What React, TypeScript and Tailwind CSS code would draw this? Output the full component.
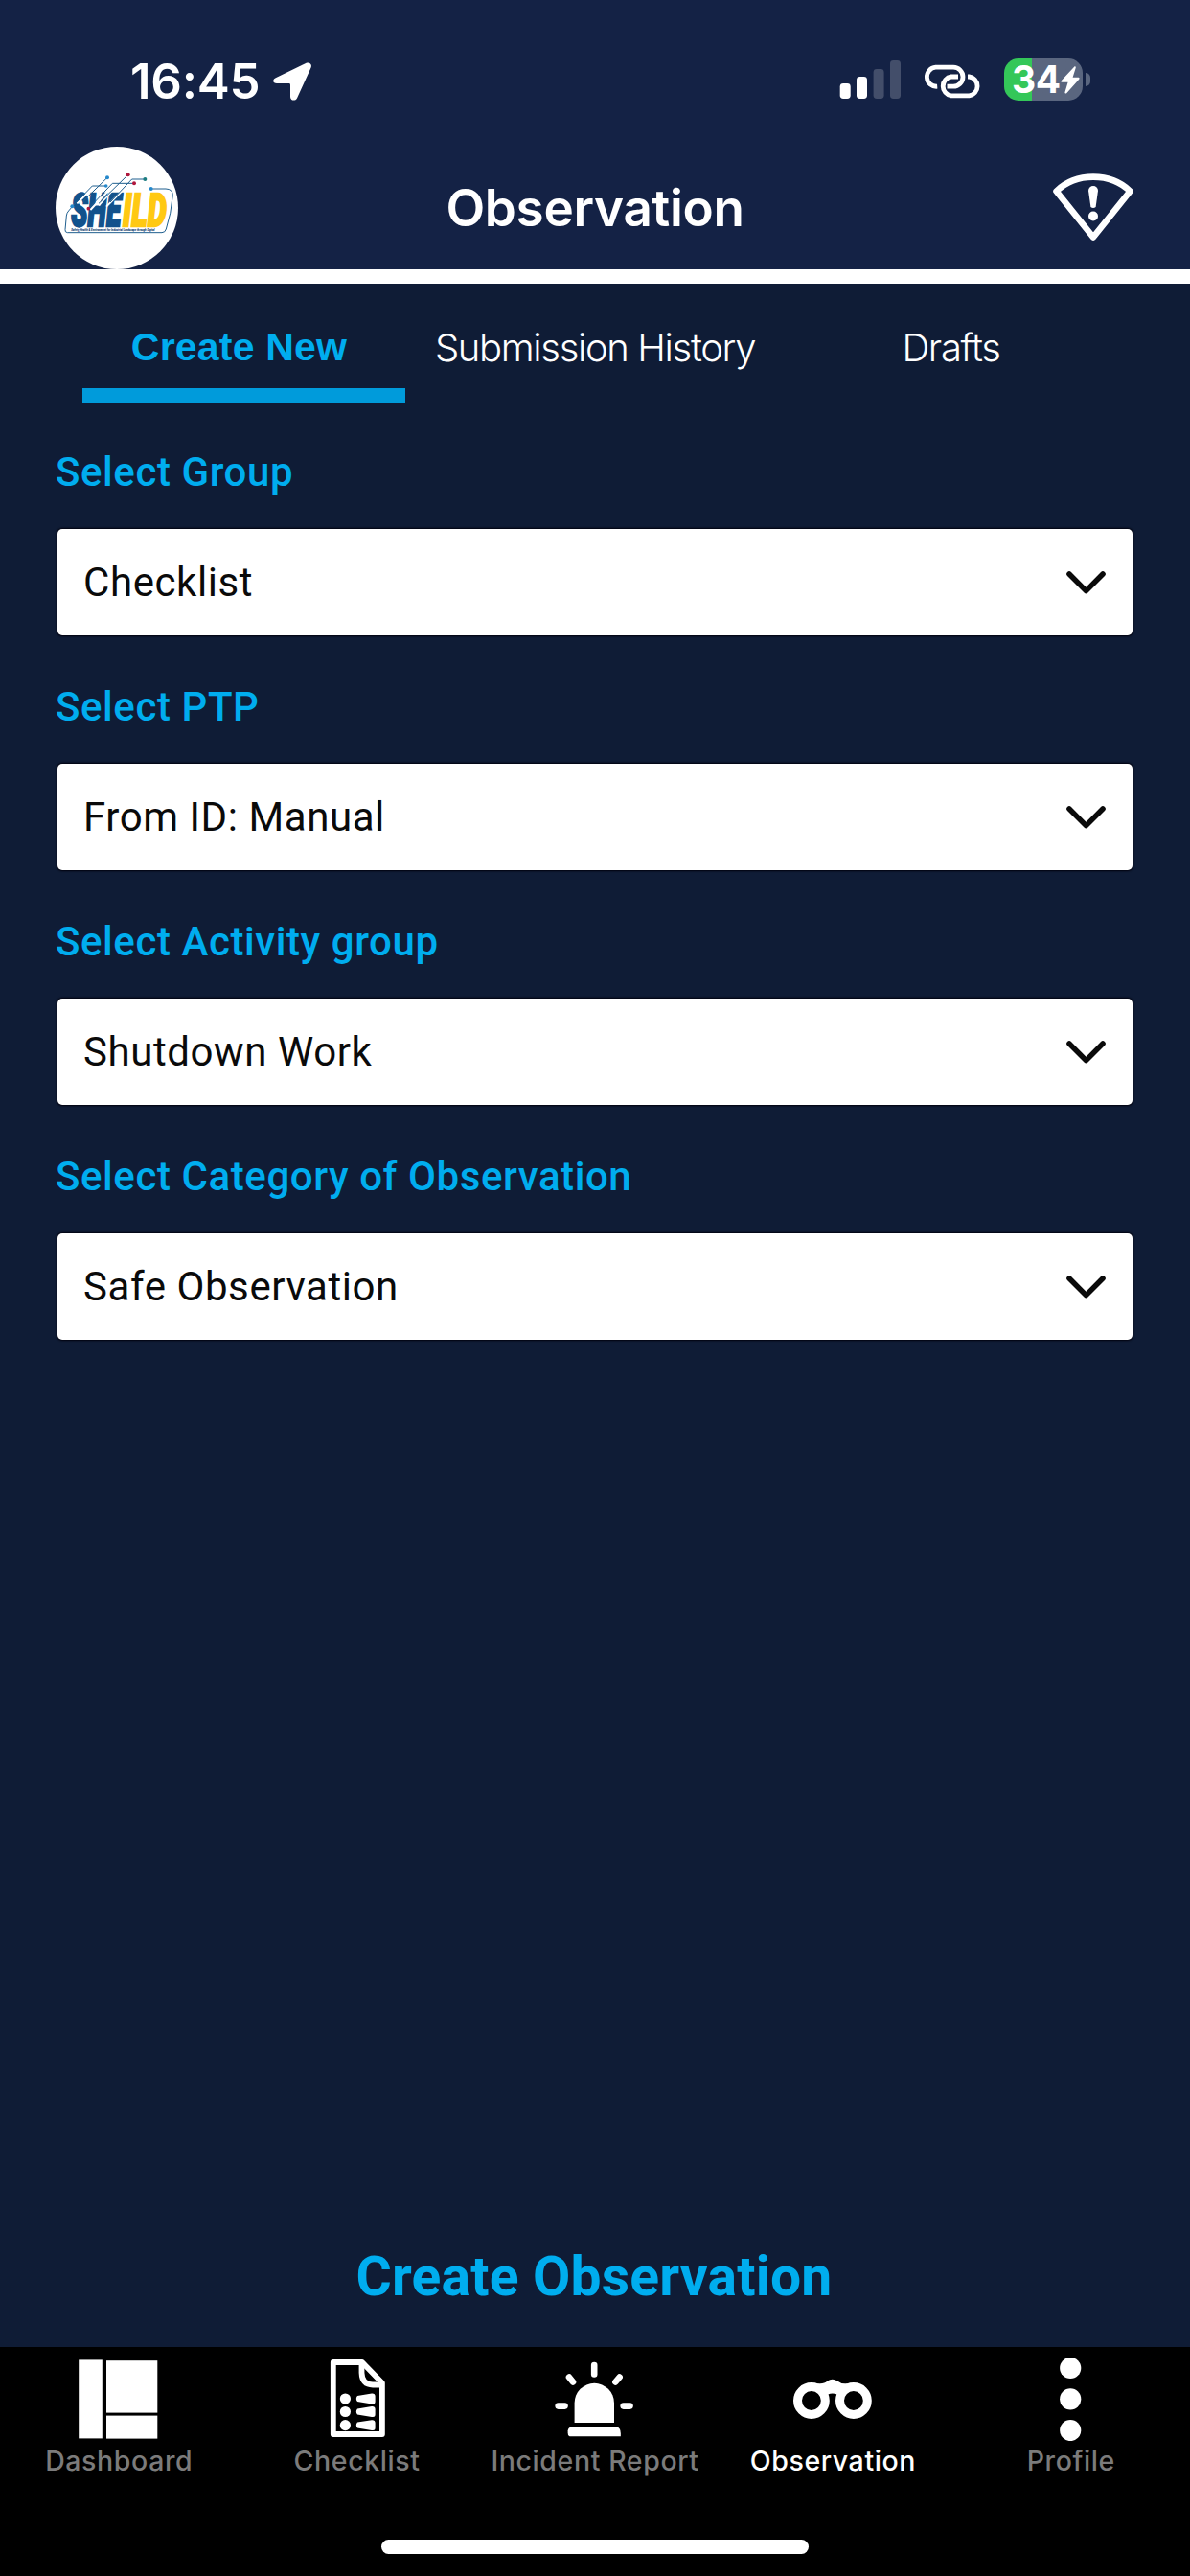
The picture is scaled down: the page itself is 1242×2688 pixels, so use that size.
import React from 'react';

const fields = [
  { label: 'Select Group', value: 'Checklist' },
  { label: 'Select PTP', value: 'From ID: Manual' },
  { label: 'Select Activity group', value: 'Shutdown Work' },
  { label: 'Select Category of Observation', value: 'Safe Observation' },
];

const StatusBar = () => (
  <div className="flex h-[153px] items-start justify-between pl-[136px] pr-[104px] pt-[61px]">
    <div className="flex items-center gap-[13px]">
      <span className="font-['Inter'] text-[51px] font-semibold leading-[48px] tracking-[-0.2px]">16:45</span>
      <svg width="40" height="40" viewBox="0 0 40 40" fill="#fff">
        <path d="M3.2 16 L34.6 0.8 C38 -0.6 41 2 39.6 5.6 L25 37.4 C23 41 18 40 18 36 V23.4 Q18 22 16.6 22 H4 C-0.5 22 -1.2 18 3.2 16 Z" />
      </svg>
    </div>
    <div className="flex items-start">
      <svg className="mr-[24px]" width="64" height="44" viewBox="0 0 64 44">
        <rect x="0.7" y="26" width="11" height="16" rx="3.4" fill="#fff" />
        <rect x="18" y="19" width="11" height="23" rx="3.4" fill="#fff" />
        <rect x="35.6" y="11" width="11" height="31" rx="3.4" fill="#434e6a" />
        <rect x="53" y="2" width="11" height="40" rx="3.4" fill="#434e6a" />
      </svg>
      <svg className="mr-[24px]" width="60" height="44" viewBox="0 0 60 44" fill="none" stroke="#fff" strokeWidth="4.8">
        <path d="M14.2 29.2 A10 10 0 0 1 12.6 9.2 H31 A10 10 0 0 1 31 29.2 H24.5" />
        <path d="M46 19 H47.5 A10 10 0 0 1 47.5 38.8 H28.8 A10 10 0 0 1 28.8 19 H36" />
      </svg>
      <div className="flex items-center gap-[3px]">
        <div className="flex h-[44px] w-[82px] items-center rounded-[15px] bg-linear-to-r from-[#34c759] from-[35%] to-[#5a667f] to-[35%] pl-[8px]">
          <span className="font-['Inter'] text-[39px] font-bold leading-[44px] tracking-[-0.5px]">34</span>
          <svg width="20" height="29" viewBox="0 0 20 29" fill="#fff">
            <path d="M14.6 0.3 L0.6 15.2 Q-0.2 16.6 1.4 16.7 H7.6 L4.4 27.6 Q4.6 29.2 6.2 28.3 L19.4 13.4 Q20 12 18.6 11.8 H12.6 L15.8 1.4 Q15.8 0 14.6 0.3 Z" />
          </svg>
        </div>
        <div className="h-[14px] w-[5px] rounded-r-full bg-[#5a667f]" />
      </div>
    </div>
  </div>
);

const Logo = () => (
  <svg width="128" height="128" viewBox="0 0 384 384">
    <circle cx="192" cy="192" r="192" fill="#fff" />
    <g transform="translate(-55 -40)">
      <g fontFamily="Roboto, sans-serif" fontWeight="900" fontStyle="italic" fontSize="146" strokeWidth="7">
        <text transform="translate(104 289) scale(0.585 1)" fill="#12528c" stroke="#12528c">SHE</text>
        <text transform="translate(265 289) scale(0.65 1)" fill="#ffc913" stroke="#ffc913">ILD</text>
      </g>
      <path d="M122 218 L168 172 M164 238 L226 172 M190 224 L236 174 M214 228 L262 180" fill="none" stroke="#fff" strokeWidth="6" />
      <g fill="none" stroke="#1f5f8f" strokeWidth="3">
        <path d="M108 227 L170 163 H213" />
        <path d="M140 212 L217 137" />
        <path d="M158 234 L233 155 H301" />
        <path d="M190 218 L282 128" />
        <path d="M226 214 L294 142 H335" />
        <path d="M354 172 H400 Q422 173 422 192 Q417 250 401 298 Q398 309 388 309 H92 Q84 308 85 300 L89 256 Q90 247 96 241 L107 228" />
      </g>
      <g fill="#2488cc">
        <circle cx="107" cy="227" r="6" />
        <circle cx="213" cy="163" r="5.5" />
        <circle cx="217" cy="137" r="6" />
        <circle cx="354" cy="172" r="6" />
      </g>
      <g fill="#b0173c">
        <circle cx="158" cy="234" r="5.5" />
        <circle cx="301" cy="155" r="6" />
        <circle cx="282" cy="128" r="6" />
      </g>
      <circle cx="335" cy="142" r="6" fill="#1c7d80" />
      <text x="104" y="303" fill="#14406f" fontFamily="Roboto, sans-serif" fontWeight="900" fontStyle="italic" fontSize="8.6">
        Safety, Health &amp; Environment for Industrial Landscape through Digital
      </text>
    </g>
  </svg>
);

const Header = () => (
  <div className="flex h-[128px] items-center justify-between pl-[58px] pr-[58px]">
    <Logo />
    <h1 className="font-['Inter'] text-[53px] font-semibold leading-[60px] tracking-[-0.3px]">Observation</h1>
    <div className="flex w-[128px] justify-end">
      <svg width="86" height="72" viewBox="0 0 86 72">
        <path d="M4.5 18.5 C25 -1.4 61 -1.4 81.5 18.5 L43 66.5 Z" fill="none" stroke="#fff" strokeWidth="6.6" strokeLinejoin="round" />
        <path d="M38 18 A5 5 0 0 1 48 18 L45.6 35 Q43 37 40.4 35 Z" fill="#fff" />
        <circle cx="43" cy="44.5" r="5" fill="#fff" />
      </svg>
    </div>
  </div>
);

const Tabs = () => (
  <div className="flex h-[124px] items-stretch pl-[86px] text-[40px] leading-[48px]">
    <div className="flex w-[337px] flex-col justify-between pt-[42px] text-center font-['Liberation_Sans'] font-bold text-[#00adef]">
      <span className="pr-[10px] text-[41px] tracking-[0.2px]">Create New</span>
      <div className="h-[15px] bg-[#009bdb]" />
    </div>
    <div className="w-[396px] pt-[43px] text-center font-['Inter'] font-light tracking-[-1.35px]">Submission History</div>
    <div className="w-[347px] pt-[43px] text-center font-['Inter'] font-light tracking-[-1.35px]">Drafts</div>
  </div>
);

const SelectField = ({ label, value }: { label: string; value: string }) => (
  <div className="flex h-[245px] flex-col">
    <label className="-ml-[2px] h-[84px] text-[42px] font-medium leading-[50px] tracking-[0.58px] text-[#00adef]">{label}</label>
    <div className="flex h-[111px] items-center justify-between rounded-[5px] bg-white pl-[27px] pr-[28px] text-[42px] leading-[50px] text-[#0a0a0a] shadow-[0_0_2px_1px_#00000d]">
      <span className="tracking-[0.58px]">{value}</span>
      <svg width="41" height="24" viewBox="0 0 41 24" fill="none" stroke="#0a0a0a" strokeWidth="5.6" strokeLinecap="round" strokeLinejoin="round">
        <path d="M3 3 L20.5 20.6 L38 3" />
      </svg>
    </div>
  </div>
);

const DashboardIcon = () => (
  <svg width="88" height="88" viewBox="0 0 88 88" fill="#fff">
    <rect x="2.2" y="3.4" width="24.6" height="82" />
    <rect x="31" y="4.2" width="53.3" height="54.4" />
    <rect x="31" y="61.6" width="53.3" height="24" />
  </svg>
);

const ChecklistIcon = () => (
  <svg width="88" height="88" viewBox="0 0 88 88" fill="none" stroke="#fff" strokeWidth="5.8" strokeLinejoin="round">
    <path d="M18.8 6 H49 L69.9 27.5 V81 H18.8 Z" />
    <path d="M48.5 7 V17 Q49 29.5 60 29.5 H69" />
    <g fill="#fff" stroke="none">
      <circle cx="31.4" cy="44" r="5.6" />
      <circle cx="31.4" cy="57.5" r="5.6" />
      <circle cx="31.4" cy="71.6" r="5.6" />
      <path d="M44 41 L59 38.6 Q62.6 38.4 62.6 41.6 V47 Q62.6 50 59 49.4 L44 47 Q41.6 44 44 41 Z" />
      <path d="M44 54.5 L59 52.1 Q62.6 51.9 62.6 55.1 V60.5 Q62.6 63.5 59 62.9 L44 60.5 Q41.6 57.5 44 54.5 Z" />
      <path d="M44 68.6 L59 66.2 Q62.6 66 62.6 69.2 V74.6 Q62.6 77.6 59 77 L44 74.6 Q41.6 71.6 44 68.6 Z" />
    </g>
  </svg>
);

const SirenIcon = () => (
  <svg width="88" height="88" viewBox="0 0 88 88" fill="#fff">
    <path d="M22.6 69 V48.5 A20.5 20.5 0 0 1 64 48.5 V69 Z" />
    <path d="M20.4 73 H66 Q70.8 74 70.8 80 V83.2 H17.6 Q15.6 82.5 15.6 79.5 V77.5 Q16 73.6 20.4 73 Z" />
    <g stroke="#fff" strokeWidth="6.6" strokeLinecap="round">
      <path d="M43.2 9 V18.5" />
      <path d="M17 21.5 L21 26.5" />
      <path d="M69.6 21.5 L65.4 26.5" />
      <path d="M5.7 51.6 H12.5" />
      <path d="M73.7 51.6 H80.5" />
    </g>
  </svg>
);

const BinocularsIcon = () => (
  <svg width="88" height="88" viewBox="0 0 88 88">
    <path d="M28 28 Q35 29 38.5 25.5 Q43.8 22 49 25.5 Q53 29 60 28 L53 42 Q49 38.4 43.8 38.4 Q39 38.4 35 42 Z" fill="#fff" />
    <circle cx="21.9" cy="46" r="14.4" fill="#000" stroke="#fff" strokeWidth="9" />
    <circle cx="65.9" cy="46" r="14.4" fill="#000" stroke="#fff" strokeWidth="9" />
  </svg>
);

const DotsIcon = () => (
  <svg width="88" height="88" viewBox="0 0 88 88" fill="#fff">
    <circle cx="43.2" cy="12" r="11.1" />
    <circle cx="43.2" cy="44.3" r="11.1" />
    <circle cx="43.2" cy="77" r="11.1" />
  </svg>
);

const navItems = [
  { label: 'Dashboard', icon: DashboardIcon },
  { label: 'Checklist', icon: ChecklistIcon },
  { label: 'Incident Report', icon: SirenIcon },
  { label: 'Observation', icon: BinocularsIcon, active: true },
  { label: 'Profile', icon: DotsIcon },
];

const BottomNav = () => (
  <div className="flex h-[239px] flex-col items-center justify-between bg-black pb-[23px] pt-[10px]">
    <div className="flex w-full">
      {navItems.map(({ label, icon: Icon, active }) => (
        <div
          key={label}
          className={`flex flex-1 basis-0 flex-col items-center whitespace-nowrap font-['Inter'] text-[28.5px] font-medium leading-[42px] tracking-[0.6px] ${
            active ? 'text-white' : 'text-[#7b7b7b]'
          }`}
        >
          <Icon />
          <span>{label}</span>
        </div>
      ))}
    </div>
    <div className="h-[15px] w-[446px] rounded-full bg-white" />
  </div>
);

const App = () => {
  return (
    <div className="flex h-[2688px] w-[1242px] flex-col overflow-hidden bg-[#0f1c36] font-['Roboto',sans-serif] text-white">
      {/* Status bar and title */}
      <div className="border-b-[15px] border-white bg-[#142245]">
        <StatusBar />
        <Header />
      </div>

      <Tabs />

      {/* Form */}
      <div className="flex-1 px-[60px] pt-[48px]">
        {fields.map((field) => (
          <SelectField key={field.label} label={field.label} value={field.value} />
        ))}
      </div>

      <button className="mb-[38px] h-[70px] pr-[2px] text-[57px] font-bold leading-[70px] tracking-[0.2px] text-[#00adef]">
        Create Observation
      </button>

      <BottomNav />
    </div>
  );
};

export default App;
